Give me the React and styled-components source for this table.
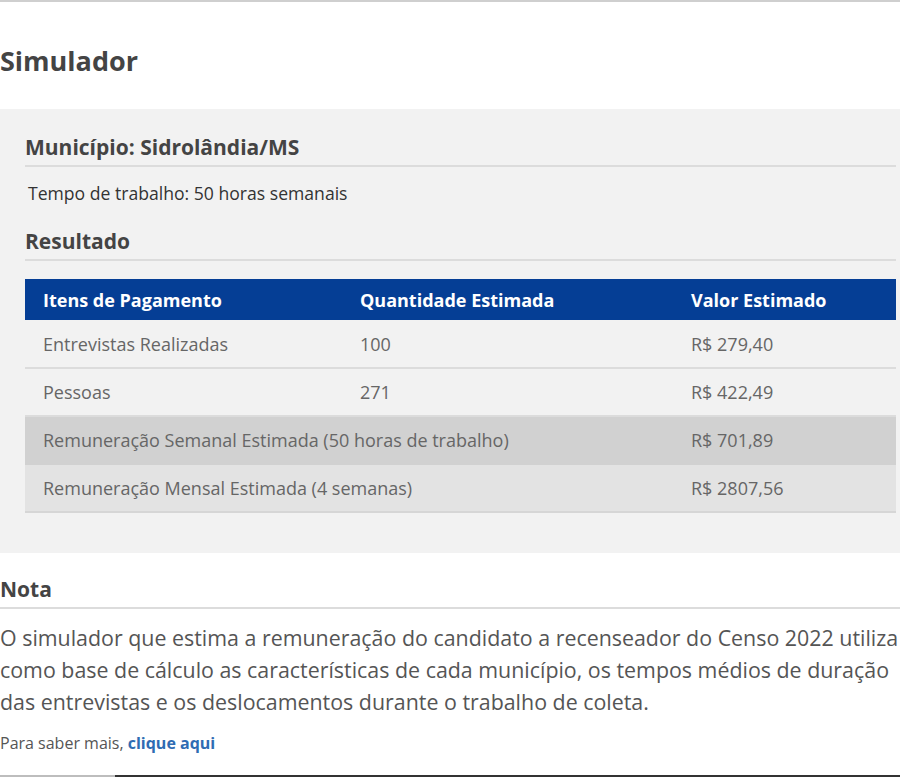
import React from "react";
import styled, { createGlobalStyle } from "styled-components";

const GlobalStyle = createGlobalStyle`
  html, body {
    margin: 0;
    padding: 0;
    background: #fff;
  }
  body {
    font-family: "Open Sans", "Noto Sans", sans-serif;
    color: #555;
  }
`;

const Page = styled.div`
  width: 900px;
  min-height: 777px;
  border-top: 2px solid #cfcfcf;
  box-sizing: border-box;
  display: flex;
  flex-direction: column;
`;

const Title = styled.h1`
  margin: 40px 0 0;
  font-size: 27px;
  font-weight: 700;
  color: #444;
  line-height: 38px;
`;

const Panel = styled.section`
  margin-top: 29px;
  background: #f2f2f2;
  padding: 20px 4px 40px 25px;
`;

const SectionTitle = styled.h2`
  margin: 0;
  font-size: 21px;
  font-weight: 700;
  color: #444;
  line-height: 36px;
  border-bottom: 2px solid #dcdcdc;
`;

const Info = styled.p`
  margin: 14px 0 18px 3px;
  font-size: 17.6px;
  color: #333;
  line-height: 24px;
`;

const Table = styled.table`
  width: 100%;
  margin-top: 18px;
  border-collapse: collapse;
  font-size: 18px;
`;

const HeadRow = styled.tr`
  background: #053e95;
  height: 41px;
`;

const Th = styled.th`
  text-align: left;
  color: #fff;
  font-weight: 700;
  padding: 0 0 0 18px;
  width: ${(p) => p.$w || "auto"};
`;

const Row = styled.tr`
  height: 48px;
  background: ${(p) => p.$bg || "transparent"};
  border-bottom: 2px solid ${(p) => p.$line || "#dcdcdc"};
`;

const Td = styled.td`
  padding: 0 0 0 18px;
  color: #666;
`;

const Nota = styled.h3`
  margin: 22px 0 0;
  font-size: 21px;
  font-weight: 700;
  color: #444;
  line-height: 28px;
  padding-bottom: 4px;
  border-bottom: 2px solid #dcdcdc;
`;

const Paragraph = styled.p`
  margin: 13px 0 0;
  font-size: 21.4px;
  line-height: 32px;
  color: #555;
`;

const Small = styled.p`
  margin: 13px 0 0;
  font-size: 16px;
  line-height: 24px;
  color: #555;
`;

const Link = styled.a`
  color: #2f6cb3;
  font-weight: 700;
  text-decoration: none;
`;

const Spacer = styled.div`
  flex: 1;
`;

const BottomBar = styled.div`
  height: 2px;
  display: flex;
`;

const BarPart = styled.div`
  width: ${(p) => p.$w};
  flex: ${(p) => (p.$w ? "none" : 1)};
  background: ${(p) => p.$c};
`;

const rows = [
  { item: "Entrevistas Realizadas", qty: "100", value: "R$ 279,40" },
  { item: "Pessoas", qty: "271", value: "R$ 422,49" },
];

export default function App() {
  return (
    <>
      <GlobalStyle />
      <Page>
        <Title>Simulador</Title>
        <Panel>
          <SectionTitle>Município: Sidrolândia/MS</SectionTitle>
          <Info>Tempo de trabalho: 50 horas semanais</Info>
          <SectionTitle>Resultado</SectionTitle>
          <Table>
            <thead>
              <HeadRow>
                <Th $w="299px">Itens de Pagamento</Th>
                <Th $w="313px">Quantidade Estimada</Th>
                <Th>Valor Estimado</Th>
              </HeadRow>
            </thead>
            <tbody>
              {rows.map((r) => (
                <Row key={r.item}>
                  <Td>{r.item}</Td>
                  <Td>{r.qty}</Td>
                  <Td>{r.value}</Td>
                </Row>
              ))}
              <Row $bg="#d1d1d1" $line="#d1d1d1">
                <Td colSpan={2}>Remuneração Semanal Estimada (50 horas de trabalho)</Td>
                <Td>R$ 701,89</Td>
              </Row>
              <Row $bg="#e3e3e3" $line="#d6d6d6">
                <Td colSpan={2}>Remuneração Mensal Estimada (4 semanas)</Td>
                <Td>R$ 2807,56</Td>
              </Row>
            </tbody>
          </Table>
        </Panel>
        <Nota>Nota</Nota>
        <Paragraph>
          O simulador que estima a remuneração do candidato a recenseador do Censo 2022 utiliza
          como base de cálculo as características de cada município, os tempos médios de duração
          das entrevistas e os deslocamentos durante o trabalho de coleta.
        </Paragraph>
        <Small>
          Para saber mais, <Link href="#">clique aqui</Link>
        </Small>
        <Spacer />
        <BottomBar>
          <BarPart $w="115px" $c="#bdbdbd" />
          <BarPart $c="#333" />
        </BottomBar>
      </Page>
    </>
  );
}
